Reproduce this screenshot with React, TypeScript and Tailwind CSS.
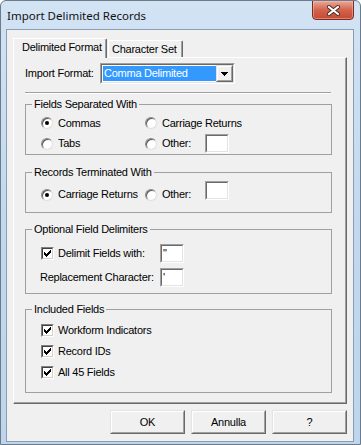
import React from "react";

function Sunken({ className = "", children }: { className?: string; children?: React.ReactNode }) {
  return (
    <div className={`shrink-0 border border-t-[#a0a0a0] border-l-[#a0a0a0] border-b-white border-r-white ${className}`}>
      <div className="w-full h-full border border-t-[#696969] border-l-[#696969] border-b-[#e3e3e3] border-r-[#e3e3e3] bg-white">
        {children}
      </div>
    </div>
  );
}

function TextBox({ value = "" }: { value?: string }) {
  return (
    <Sunken className="w-[24px] h-[19px]">
      <div className="pl-[1px] pt-[1px] leading-[13px] text-black">{value}</div>
    </Sunken>
  );
}

function Radio({ checked = false }: { checked?: boolean }) {
  return (
    <span className="w-[12px] h-[12px] shrink-0 rounded-full bg-white border border-t-[#8a8a8a] border-l-[#8a8a8a] border-b-[#dedede] border-r-[#dedede] shadow-[inset_1px_1px_0_#5a5a5a] flex items-center justify-center">
      {checked && <span className="w-[4px] h-[4px] rounded-full bg-black" />}
    </span>
  );
}

function RadioLabel({ checked = false, children }: { checked?: boolean; children: React.ReactNode }) {
  return (
    <div className="flex items-center gap-[5px] h-[13px] whitespace-nowrap">
      <Radio checked={checked} />
      <span>{children}</span>
    </div>
  );
}

function Check() {
  const tops = [2, 3, 4, 3, 2, 1, 0];
  return (
    <span className="w-[13px] h-[13px] shrink-0 border border-t-[#808080] border-l-[#808080] border-b-white border-r-white">
      <span className="block w-full h-full border border-t-[#404040] border-l-[#404040] border-b-[#d4d0c8] border-r-[#d4d0c8] bg-white">
        <svg width="9" height="9" viewBox="0 0 9 9" className="block" shapeRendering="crispEdges">
          {tops.map((t, i) => (
            <rect key={i} x={1 + i} y={1 + t} width={1} height={3} fill="#000" />
          ))}
        </svg>
      </span>
    </span>
  );
}

function CheckLabel({ children }: { children: React.ReactNode }) {
  return (
    <div className="flex items-center gap-[4px] whitespace-nowrap">
      <Check />
      <span>{children}</span>
    </div>
  );
}

function Group({ title, className = "", children }: { title: string; className?: string; children: React.ReactNode }) {
  return (
    <fieldset className={`w-[307px] shrink-0 border border-[#a0a0a0] ${className}`}>
      <legend className="ml-[6px] px-[2px] leading-[13px]">{title}</legend>
      {children}
    </fieldset>
  );
}

function Button({ children }: { children: React.ReactNode }) {
  return (
    <div className="w-[75px] h-[24px] border border-t-[#e3e3e3] border-l-[#e3e3e3] border-b-[#696969] border-r-[#696969] bg-[#f0f0f0]">
      <div className="w-full h-full border border-t-white border-l-white border-b-[#a0a0a0] border-r-[#a0a0a0] flex items-center justify-center">
        {children}
      </div>
    </div>
  );
}

function CloseButton() {
  return (
    <div className="-mt-px w-[42px] h-[20px] rounded-b-[4px] border border-[#7a2e22] bg-linear-to-b from-[#e9a898] via-[#d3624c] to-[#c44a33] shadow-[inset_0_0_0_1px_rgba(255,200,190,0.45)] flex items-center justify-center">
      <svg width="13" height="11" viewBox="0 0 13 11">
        <path d="M2 2 L11 9 M11 2 L2 9" stroke="#4a2a26" strokeWidth="4" strokeLinecap="square" />
        <path d="M2 2 L11 9 M11 2 L2 9" stroke="#ffffff" strokeWidth="2" strokeLinecap="square" />
      </svg>
    </div>
  );
}

export default function App() {
  return (
    <div className="w-[361px] h-[445px] flex flex-col border border-[#6b7b8c] rounded-t-[6px] bg-linear-to-b from-[#d2e3f4] via-[#c3d8ee] to-[#bed5ec] pl-[5px] pr-[6px] pb-[2px] font-['Liberation_Sans',Arial,sans-serif] text-[11px] tracking-[-0.25px] leading-[13px] text-black overflow-hidden">
      {/* Title bar */}
      <div className="h-[28px] shrink-0 flex items-start justify-between">
        <div className="pt-[8px] pl-[1px] font-['Noto_Sans',sans-serif] text-[11.5px] tracking-normal leading-[14px] text-[#111]">
          Import Delimited Records
        </div>
        <CloseButton />
      </div>

      {/* Client */}
      <div className="flex-1 border border-[#8a9db2] bg-[#f0f0f0] px-[6px] pt-[8px] flex flex-col">
        {/* Tabs */}
        <div className="h-[19px] shrink-0 flex items-end">
          <div className="relative z-10 -mb-px w-[94px] h-[20px] bg-[#f0f0f0] border-t border-l border-r border-t-white border-l-white border-r-[#696969] shadow-[inset_-1px_0_0_#a0a0a0] rounded-tr-[2px] pl-[8px] pt-[2px] whitespace-nowrap">
            Delimited Format
          </div>
          <div className="w-[75px] h-[17px] ml-px border-t border-l border-r border-t-white border-l-white border-r-[#696969] shadow-[inset_-1px_0_0_#a0a0a0] rounded-tr-[2px] pl-[3px] pt-[2px] whitespace-nowrap">
            Character Set
          </div>
        </div>

        {/* Panel */}
        <div className="h-[347px] shrink-0 border border-t-white border-l-white border-r-[#696969] border-b-[#696969] shadow-[inset_-1px_-1px_0_#a0a0a0] pl-[11px] pt-[5px] flex flex-col">
          <div className="h-[21px] flex items-center">
            <div className="w-[75px] whitespace-nowrap">Import Format:</div>
            <div className="w-[135px] h-[21px] border border-t-[#a0a0a0] border-l-[#a0a0a0] border-b-white border-r-white">
              <div className="w-full h-full border border-t-[#696969] border-l-[#696969] border-b-[#e3e3e3] border-r-[#e3e3e3] bg-white flex">
                <div className="flex-1 my-[1px] ml-[1px] bg-[#3399ff] text-white pl-[1px] flex items-center whitespace-nowrap">
                  Comma Delimited
                </div>
                <div className="w-[17px] h-full border border-t-[#e3e3e3] border-l-[#e3e3e3] border-b-[#696969] border-r-[#696969] bg-[#f0f0f0]">
                  <div className="w-full h-full border border-t-white border-l-white border-b-[#a0a0a0] border-r-[#a0a0a0] flex items-center justify-center">
                    <svg width="7" height="4" viewBox="0 0 7 4" shapeRendering="crispEdges" className="block">
                      <path d="M0 0 H7 V1 H6 V2 H5 V3 H4 V4 H3 V3 H2 V2 H1 V1 H0 Z" fill="#000" />
                    </svg>
                  </div>
                </div>
              </div>
            </div>
          </div>

          <div className="mt-[8px] w-[306px] h-[2px] border-t border-b border-t-[#a0a0a0] border-b-white" />

          <Group title="Fields Separated With" className="mt-[4px] h-[57px]">
            <div className="pl-[15px] pt-[2px]">
              <div className="flex h-[20px] items-center">
                <div className="w-[104px]"><RadioLabel checked>Commas</RadioLabel></div>
                <RadioLabel>Carriage Returns</RadioLabel>
              </div>
              <div className="flex h-[21px] items-center">
                <div className="w-[104px]"><RadioLabel>Tabs</RadioLabel></div>
                <div className="w-[60px]"><RadioLabel>Other:</RadioLabel></div>
                <TextBox />
              </div>
            </div>
          </Group>

          <Group title="Records Terminated With" className="mt-[11px] h-[47px]">
            <div className="pl-[15px] pt-[2px] flex items-start h-[22px]">
              <div className="w-[104px] mt-[7px]"><RadioLabel checked>Carriage Returns</RadioLabel></div>
              <div className="w-[60px] mt-[7px]"><RadioLabel>Other:</RadioLabel></div>
              <TextBox />
            </div>
          </Group>

          <Group title="Optional Field Delimiters" className="mt-[10px] h-[71px]">
            <div className="pl-[15px] pt-[8px]">
              <div className="flex h-[19px] items-center">
                <div className="w-[119px]"><CheckLabel>Delimit Fields with:</CheckLabel></div>
                <TextBox value={'"'} />
              </div>
              <div className="flex h-[19px] items-center mt-[5px]">
                <div className="w-[120px] -ml-px whitespace-nowrap">Replacement Character:</div>
                <TextBox value={"'"} />
              </div>
            </div>
          </Group>

          <Group title="Included Fields" className="mt-[9px] h-[90px]">
            <div className="pl-[15px] pt-[4px]">
              <div className="flex h-[21px] items-center"><CheckLabel>Workform Indicators</CheckLabel></div>
              <div className="flex h-[21px] items-center"><CheckLabel>Record IDs</CheckLabel></div>
              <div className="flex h-[21px] items-center"><CheckLabel>All 45 Fields</CheckLabel></div>
            </div>
          </Group>
        </div>

        {/* Buttons */}
        <div className="mt-[6px] flex justify-end gap-[6px]">
          <Button>OK</Button>
          <Button>Annulla</Button>
          <Button>?</Button>
        </div>
      </div>
    </div>
  );
}
